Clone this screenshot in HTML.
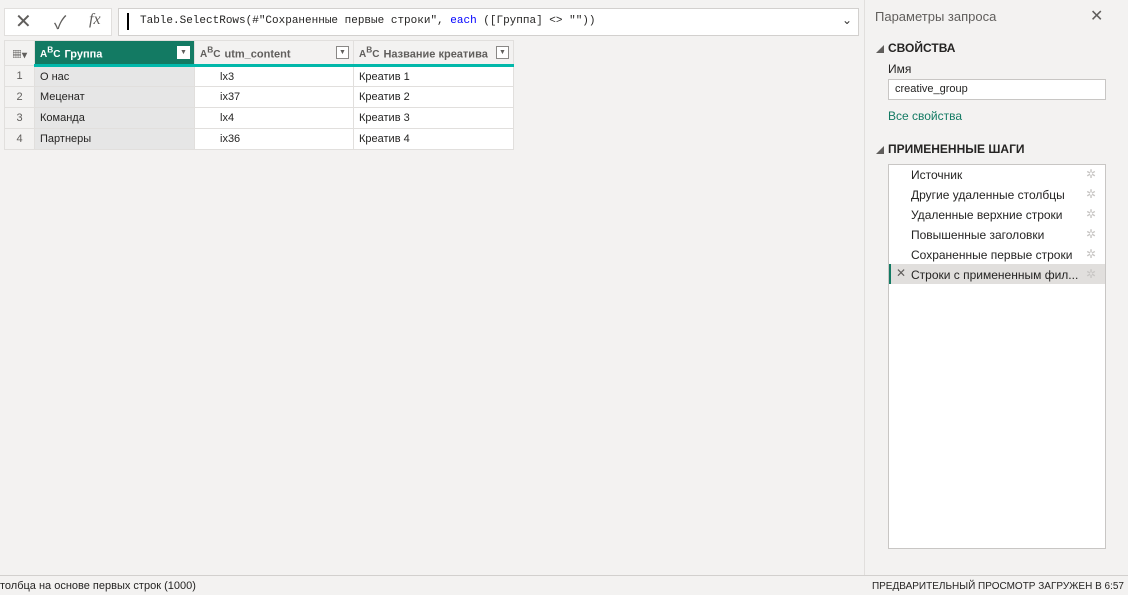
<!DOCTYPE html>
<html><head><meta charset="utf-8"><style>
*{margin:0;padding:0;box-sizing:border-box}
body{width:1128px;height:595px;background:#f3f2f1;font-family:"Liberation Sans","Noto Sans CJK SC",sans-serif;font-size:12px;color:#252423;position:relative;overflow:hidden}
.a{position:absolute}
.box{background:#fff;border:1px solid #d2d0ce}
table{border-collapse:collapse;position:absolute;left:4px;top:40px;background:#fff;font-size:11px}
td{border:1px solid #e1dfdd;height:21px;padding-left:5px}
.h td{height:25px;background:#f3f2f1;font-weight:bold;color:#605e5c;position:relative}
.n{width:30px;text-align:center;padding:0;color:#605e5c;background:#f3f2f1}
.g{background:#e6e6e6}
.abc{font-size:10px;font-weight:bold;margin-right:4px}
.dd{position:absolute;right:4px;top:5px;width:13px;height:13px;border:1px solid #8a8886;background:#fff;font-size:7px;text-align:center;line-height:12px;color:#605e5c}
.step{position:absolute;left:911px;font-size:12px}
.gear{position:absolute;left:1086px;color:#c8c6c4;font-size:12px}
</style></head><body>
<div class="a box" style="left:4px;top:8px;width:108px;height:28px;border-color:#e1dfdd"></div>
<div class="a" style="left:15px;top:9px;font-size:20px;color:#605e5c">✕</div>
<div class="a" style="left:54px;top:9px;font-size:18px;color:#605e5c">✓</div>
<div class="a" style="left:89px;top:11px;font-size:16px;font-style:italic;font-family:'Liberation Serif',serif;color:#605e5c">fx</div>
<div class="a box" style="left:118px;top:8px;width:741px;height:28px"></div>
<div class="a" style="left:127px;top:13px;width:2px;height:17px;background:#000"></div>
<div class="a" style="left:140px;top:15px;font-family:'Liberation Mono',monospace;font-size:11px;white-space:pre">Table.SelectRows(#"Сохраненные первые строки", <span style="color:#0000ff">each</span> ([Группа] &lt;&gt; ""))</div>
<div class="a" style="left:842px;top:13px;font-size:12px;color:#323130">⌄</div>
<table>
<tr class="h"><td class="n" style="font-size:10px">▦▾</td>
<td style="width:160px;background:#137a63;color:#fff;border-bottom:3px solid #01b8aa"><span class="abc">A<sup>B</sup>C</span>Группа<span class="dd" style="border-color:#fff">▼</span></td>
<td style="width:159px;border-bottom:3px solid #01b8aa"><span class="abc">A<sup>B</sup>C</span>utm_content<span class="dd">▼</span></td>
<td style="width:160px;border-bottom:3px solid #01b8aa"><span class="abc">A<sup>B</sup>C</span>Название креатива<span class="dd">▼</span></td></tr>
<tr><td class="n">1</td><td class="g">О нас</td><td style="padding-left:25px">lx3</td><td>Креатив 1</td></tr>
<tr><td class="n">2</td><td class="g">Меценат</td><td style="padding-left:25px">ix37</td><td>Креатив 2</td></tr>
<tr><td class="n">3</td><td class="g">Команда</td><td style="padding-left:25px">lx4</td><td>Креатив 3</td></tr>
<tr><td class="n">4</td><td class="g">Партнеры</td><td style="padding-left:25px">ix36</td><td>Креатив 4</td></tr>
</table>
<div class="a" style="left:864px;top:0;width:1px;height:575px;background:#e1dfdd"></div>
<div class="a" style="left:875px;top:9px;font-size:13px;color:#605e5c">Параметры запроса</div>
<div class="a" style="left:1090px;top:6px;font-size:16px;color:#605e5c">✕</div>
<div class="a" style="left:876px;top:44px;font-size:8px;color:#605e5c">◢</div>
<div class="a" style="left:888px;top:41px;font-size:12px;font-weight:bold">СВОЙСТВА</div>
<div class="a" style="left:888px;top:62px;font-size:12px">Имя</div>
<div class="a box" style="left:888px;top:79px;width:218px;height:21px;border-color:#c8c6c4"></div>
<div class="a" style="left:895px;top:83px;font-size:11px">creative_group</div>
<div class="a" style="left:888px;top:109px;font-size:12px;color:#137a63">Все свойства</div>
<div class="a" style="left:876px;top:145px;font-size:8px;color:#605e5c">◢</div>
<div class="a" style="left:888px;top:142px;font-size:12px;font-weight:bold">ПРИМЕНЕННЫЕ ШАГИ</div>
<div class="a box" style="left:888px;top:164px;width:218px;height:385px;border-color:#c8c6c4"></div>
<div class="a" style="left:889px;top:264px;width:216px;height:20px;background:#e1dfdd"></div>
<div class="a" style="left:889px;top:264px;width:2px;height:20px;background:#137a63"></div>
<div class="step" style="top:168px">Источник</div>
<div class="step" style="top:188px">Другие удаленные столбцы</div>
<div class="step" style="top:208px">Удаленные верхние строки</div>
<div class="step" style="top:228px">Повышенные заголовки</div>
<div class="step" style="top:248px">Сохраненные первые строки</div>
<div class="a" style="left:896px;top:266px;font-size:12px;color:#605e5c">✕</div>
<div class="step" style="top:268px">Строки с примененным фил...</div>
<div class="gear" style="top:167px">✲</div><div class="gear" style="top:187px">✲</div><div class="gear" style="top:207px">✲</div><div class="gear" style="top:227px">✲</div><div class="gear" style="top:247px">✲</div><div class="gear" style="top:267px">✲</div>
<div class="a" style="left:0;top:575px;width:1128px;height:1px;background:#d2d0ce"></div>
<div class="a" style="left:0;top:580px;font-size:11px">толбца на основе первых строк (1000)</div>
<div class="a" style="right:4px;top:581px;font-size:10px">ПРЕДВАРИТЕЛЬНЫЙ ПРОСМОТР ЗАГРУЖЕН В 6:57</div>
</body></html>
